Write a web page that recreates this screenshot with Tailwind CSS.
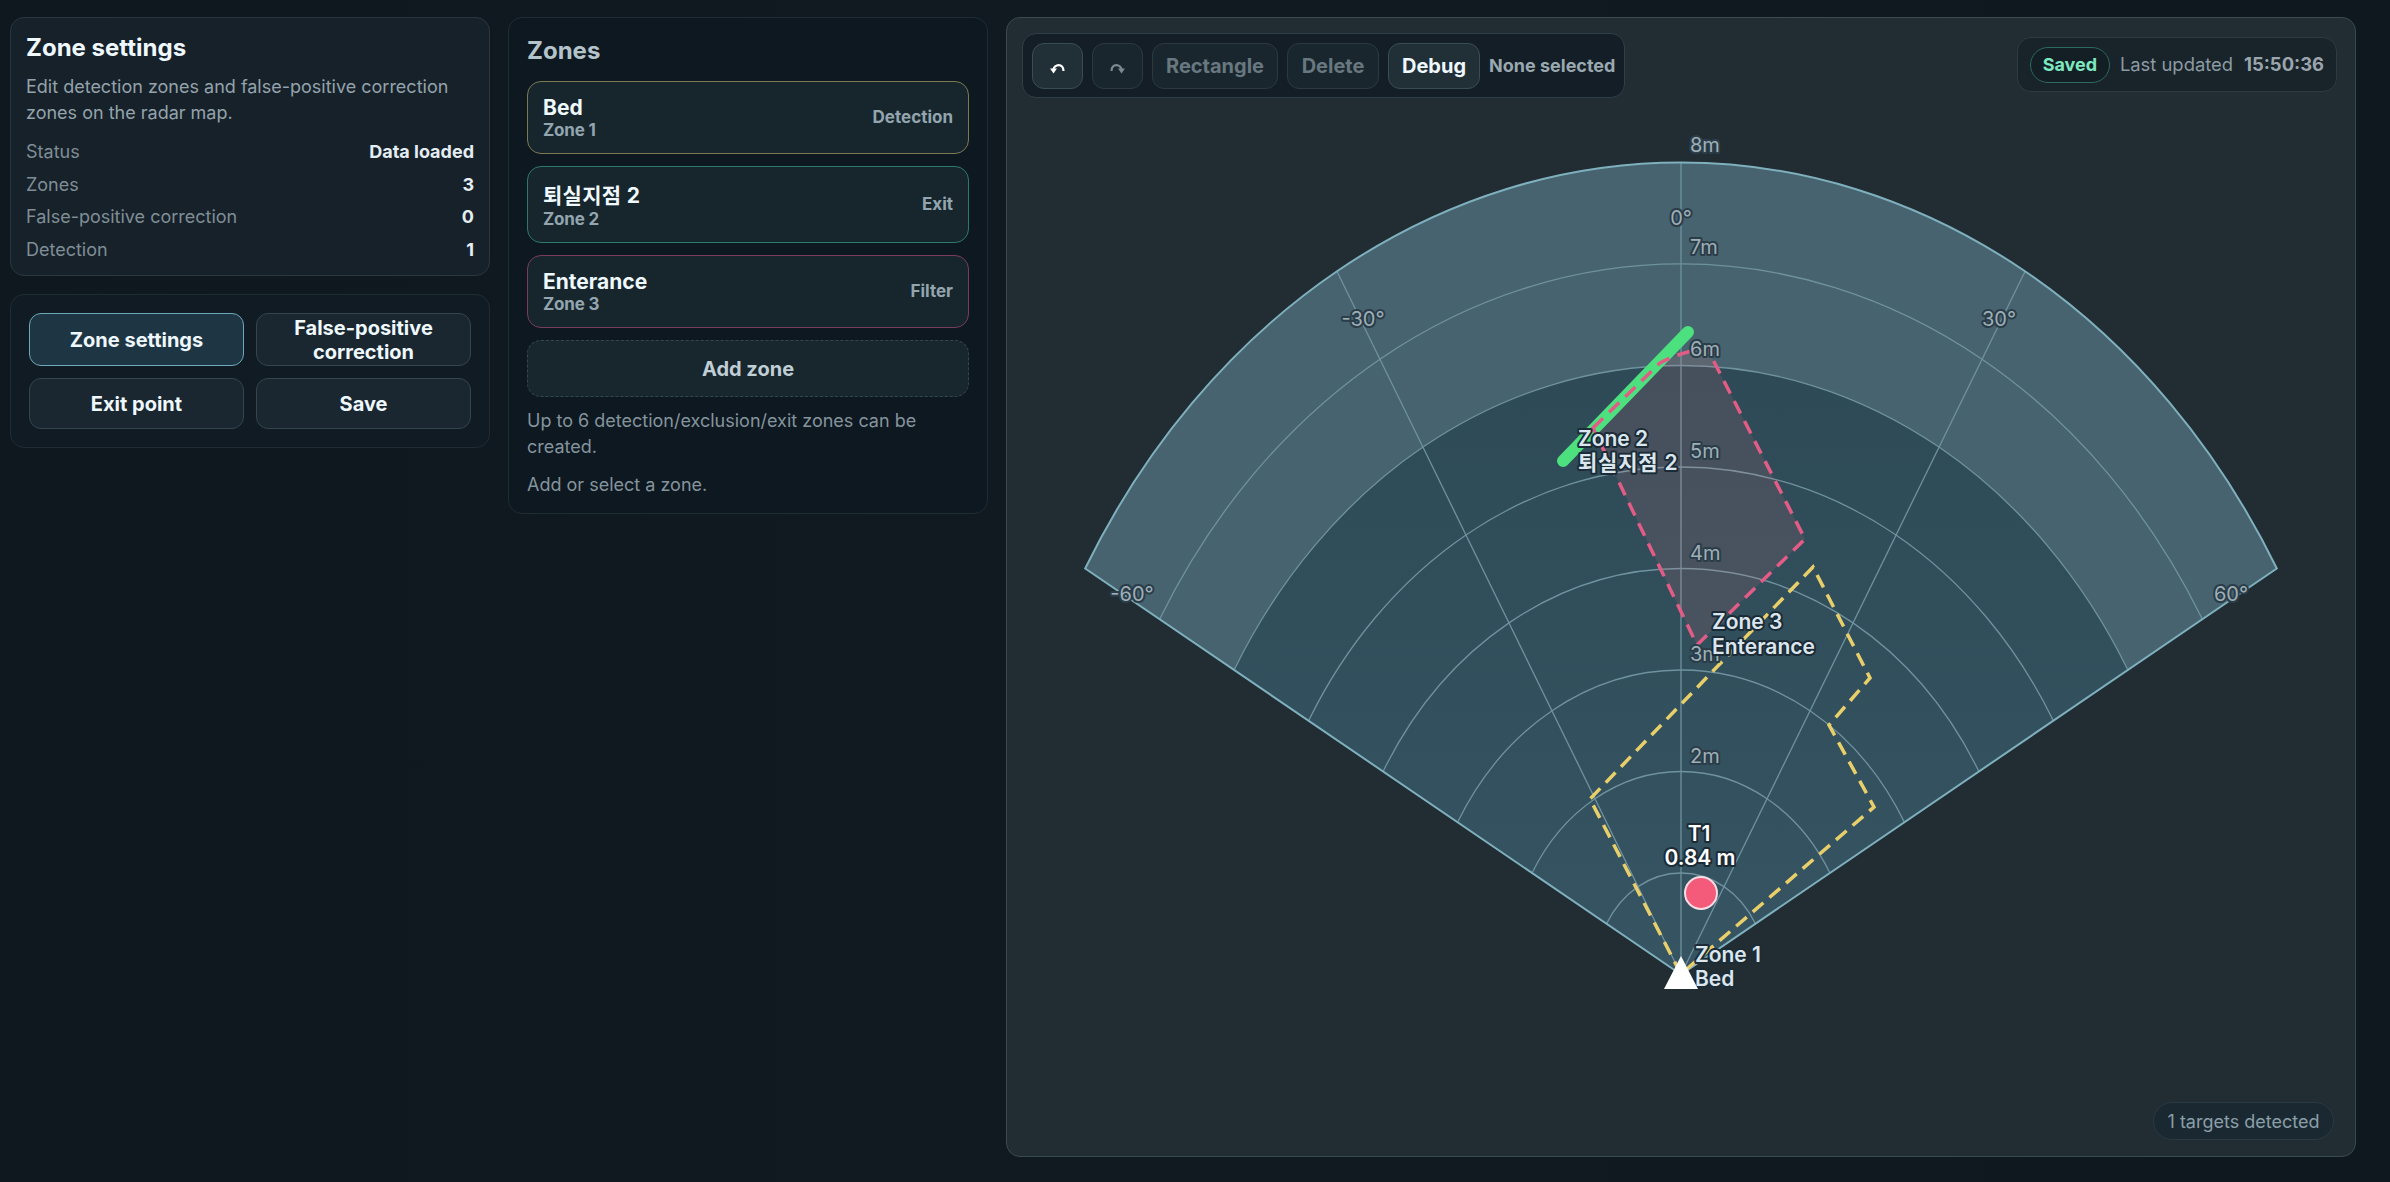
<!DOCTYPE html>
<html lang="en">
<head>
<meta charset="utf-8">
<script src="https://cdn.jsdelivr.net/npm/@tailwindcss/browser@4"></script>
<title>Zone settings</title>
</head>
<body class="m-0 h-[1182px] w-[2390px] overflow-hidden bg-[linear-gradient(90deg,#10181f,#111a21_50%,#10181f)] font-['Inter','Noto_Sans_CJK_KR',sans-serif] text-[#f0f6fa]">
<div class="flex items-start gap-[18px] pl-[10px] pt-[17px]">

  <aside class="flex w-[480px] flex-col gap-[18px]">
    <section class="h-[259px] rounded-[14px] border border-[#2a3740] bg-[#17212a] px-[15px] pt-[14px]">
      <h1 class="text-[24px] leading-[32px] font-bold text-[#eef8fd]">Zone settings</h1>
      <p class="mt-[10px] text-[18px] leading-[26px] text-[#94a3ab]">Edit detection zones and false-positive correction zones on the radar map.</p>
      <dl class="mt-[10px] text-[18px] leading-[32.5px]">
        <div class="flex justify-between"><dt class="text-[#7f8e96]">Status</dt><dd class="font-bold text-[#e4edf2]">Data loaded</dd></div>
        <div class="flex justify-between"><dt class="text-[#7f8e96]">Zones</dt><dd class="font-bold text-[#e4edf2]">3</dd></div>
        <div class="flex justify-between"><dt class="text-[#7f8e96]">False-positive correction</dt><dd class="font-bold text-[#e4edf2]">0</dd></div>
        <div class="flex justify-between"><dt class="text-[#7f8e96]">Detection</dt><dd class="font-bold text-[#e4edf2]">1</dd></div>
      </dl>
    </section>
    <section class="grid h-[154px] grid-cols-2 grid-rows-[53px_51px] gap-[12px] rounded-[14px] border border-[#1f2c34] bg-[#111b23] p-[18px]">
      <button class="rounded-[12px] border border-[#6ea8bb] bg-[#1e3644] text-[20px] leading-[24px] font-bold text-[#eef8fd]">Zone settings</button>
      <button class="rounded-[12px] border border-[#33454e] bg-[#1a2730] text-[20px] leading-[24px] font-bold text-[#eef8fd]">False-positive correction</button>
      <button class="rounded-[12px] border border-[#33454e] bg-[#1a2730] text-[20px] leading-[24px] font-bold text-[#eef8fd]">Exit point</button>
      <button class="rounded-[12px] border border-[#33454e] bg-[#1a2730] text-[20px] leading-[24px] font-bold text-[#eef8fd]">Save</button>
    </section>
  </aside>

  <section class="h-[497px] w-[480px] rounded-[14px] border border-[#1f2c34] bg-[#0e1820] px-[18px] pt-[17px]">
    <h2 class="text-[24px] leading-[32px] font-bold text-[#b4c3ca]">Zones</h2>
    <div class="mt-[14px] flex flex-col gap-[12px]">
      <div class="flex h-[73px] items-center justify-between rounded-[14px] border border-[#7d7a52] bg-[#17252d] px-[15px]">
        <div class="pt-[2px]"><div class="text-[21px] leading-[24px] font-bold text-[#eef8fd]">Bed</div><div class="text-[17px] leading-[21px] font-bold tracking-[-0.2px] text-[#93a5ae]">Zone 1</div></div>
        <span class="text-[17px] font-bold text-[#93a5ae]">Detection</span>
      </div>
      <div class="flex h-[77px] items-center justify-between rounded-[14px] border border-[#2d7a68] bg-[#17252d] px-[15px]">
        <div class="pt-[4px]"><div class="text-[21px] leading-[26px] font-bold tracking-[0.3px] text-[#eef8fd]">퇴실지점 2</div><div class="text-[17px] leading-[21px] font-bold tracking-[-0.2px] text-[#93a5ae]">Zone 2</div></div>
        <span class="text-[17px] font-bold text-[#93a5ae]">Exit</span>
      </div>
      <div class="flex h-[73px] items-center justify-between rounded-[14px] border border-[#7a3c5e] bg-[#17252d] px-[15px]">
        <div class="pt-[2px]"><div class="text-[21px] leading-[24px] font-bold text-[#eef8fd]">Enterance</div><div class="text-[17px] leading-[21px] font-bold tracking-[-0.2px] text-[#93a5ae]">Zone 3</div></div>
        <span class="text-[17px] font-bold text-[#93a5ae]">Filter</span>
      </div>
      <button class="h-[57px] rounded-[14px] border border-dashed border-[#34464f] bg-[#18262e] text-[20px] font-bold text-[#c0ced5]">Add zone</button>
    </div>
    <p class="mt-[11px] text-[18px] leading-[26px] text-[#84949d]">Up to 6 detection/exclusion/exit zones can be created.</p>
    <p class="mt-[12px] text-[18px] leading-[26px] text-[#84949d]">Add or select a zone.</p>
  </section>

  <main class="relative h-[1140px] w-[1350px] rounded-[14px] border border-[#3a4a52] bg-[#212c33]">
    <svg class="absolute -top-px -left-px" width="1350" height="1140" viewBox="1006 17 1350 1140" fill="none" font-family="Inter, 'Noto Sans CJK KR', sans-serif">
      <defs>
        <linearGradient id="sector" x1="0" y1="974" x2="0" y2="370" gradientUnits="userSpaceOnUse">
          <stop offset="0" stop-color="#365462"/>
          <stop offset="1" stop-color="#2e4a57"/>
        </linearGradient>
      </defs>
      <path d="M1681 974.5 L1085.16 568.5 A688 812 0 0 1 2276.84 568.5 Z" fill="url(#sector)"/>
      <path d="M1234.12 670 A516 609 0 0 1 2127.88 670 L2276.84 568.5 A688 812 0 0 0 1085.16 568.5 Z" fill="#47636f"/>

      <g stroke="#6f929f" stroke-width="1.3">
        <path d="M1606.52 923.75 A86 101.5 0 0 1 1755.48 923.75"/>
        <path d="M1532.04 873 A172 203 0 0 1 1829.96 873"/>
        <path d="M1457.56 822.25 A258 304.5 0 0 1 1904.44 822.25"/>
        <path d="M1383.08 771.5 A344 406 0 0 1 1978.92 771.5"/>
        <path d="M1308.6 720.75 A430 507.5 0 0 1 2053.4 720.75"/>
        <path d="M1234.12 670 A516 609 0 0 1 2127.88 670"/>
        <path d="M1159.64 619.25 A602 710.5 0 0 1 2202.36 619.25"/>
        <path d="M1681 974.5 L1337 271.5"/>
        <path d="M1681 974.5 L1681 162.5"/>
        <path d="M1681 974.5 L2025 271.5"/>
      </g>
      <path d="M1681 974.5 L1085.16 568.5 A688 812 0 0 1 2276.84 568.5 Z" stroke="#7fb0bd" stroke-width="2"/>

      <path d="M1681 974 L1590 799 L1813 567 L1870 678 L1829 725 L1874 807 Z" stroke="#e8cf6a" stroke-width="3.5" stroke-dasharray="14 8"/>
      <path d="M1593 428 L1660 363 Q1680 352 1707 348 L1805 539 L1697 645 Z" fill="#f67c82" fill-opacity="0.12"/>
      <path d="M1563 461 L1688 332" stroke="#4de07f" stroke-width="12" stroke-linecap="round"/>
      <path d="M1593 428 L1660 363 Q1680 352 1707 348 L1805 539 L1697 645 Z" stroke="#e25c85" stroke-width="3.5" stroke-dasharray="14 8.5"/>

      <g font-size="20" fill="#9fafb7" stroke="#2a3d49" stroke-width="4" stroke-linejoin="round" class="[paint-order:stroke]">
        <text x="1690" y="152">8m</text>
        <text x="1690" y="254">7m</text>
        <text x="1690" y="356">6m</text>
        <text x="1690" y="458">5m</text>
        <text x="1690" y="560">4m</text>
        <text x="1690" y="661">3m</text>
        <text x="1690" y="763">2m</text>
        <text x="1681" y="225" text-anchor="middle">0°</text>
        <text x="1363" y="326" text-anchor="middle">-30°</text>
        <text x="1999" y="326" text-anchor="middle">30°</text>
        <text x="1132" y="601" text-anchor="middle">-60°</text>
        <text x="2231" y="601" text-anchor="middle">60°</text>
      </g>

      <g font-size="21" font-weight="600" fill="#dbe6ee" stroke="#1c2c36" stroke-width="4" stroke-linejoin="round" class="[paint-order:stroke]">
        <text x="1578" y="446">Zone 2</text>
        <text x="1578" y="470" letter-spacing="0.8">퇴실지점 2</text>
        <text x="1712" y="629">Zone 3</text>
        <text x="1712" y="654">Enterance</text>
        <text x="1695" y="962">Zone 1</text>
        <text x="1695" y="986">Bed</text>
      </g>

      <path d="M1681 956 L1698 989 L1664 989 Z" fill="#fff"/>
      <circle cx="1701" cy="893" r="16" fill="#f45b7a" stroke="#f8dde4" stroke-width="2"/>
      <g font-size="21" font-weight="600" fill="#fff" stroke="#1c2c36" stroke-width="4" stroke-linejoin="round" text-anchor="middle" class="[paint-order:stroke]">
        <text x="1699" y="841">T1</text>
        <text x="1700" y="865">0.84 m</text>
      </g>
    </svg>

    <div class="relative flex items-start justify-between pt-[15px] pr-[18px] pl-[15px]">
      <div class="flex h-[65px] items-center gap-[9px] rounded-[14px] border border-[#2f3f47] bg-[#141e26] px-[9px]">
        <button class="flex h-[46px] w-[51px] items-center justify-center rounded-[12px] border border-[#3a4d56] bg-[#212f37] pt-[5px] text-white" aria-label="Undo">
          <svg width="15" height="11" viewBox="0 0 15 11" fill="none" stroke="currentColor" stroke-width="2.2"><path d="M3.5 6.5 C4 1.5 13.5 -0.5 13.5 8"/><path d="M0 5.5 L7 5.5 L3.5 10.5 Z" fill="currentColor" stroke="none"/></svg>
        </button>
        <button class="flex h-[46px] w-[51px] items-center justify-center rounded-[12px] border border-[#2b3a42] bg-[#1a262d] pt-[5px] text-[#7b8a91]" aria-label="Redo">
          <svg width="15" height="11" viewBox="0 0 15 11" fill="none" stroke="currentColor" stroke-width="2.2"><path d="M11.5 6.5 C11 1.5 1.5 -0.5 1.5 8"/><path d="M8 5.5 L15 5.5 L11.5 10.5 Z" fill="currentColor" stroke="none"/></svg>
        </button>
        <button class="h-[46px] w-[126px] rounded-[12px] border border-[#2b3a42] bg-[#1a262d] text-[20px] font-bold text-[#687880]">Rectangle</button>
        <button class="h-[46px] w-[92px] rounded-[12px] border border-[#2b3a42] bg-[#1a262d] text-[20px] font-bold text-[#687880]">Delete</button>
        <button class="h-[46px] w-[92px] rounded-[12px] border border-[#3a4d56] bg-[#212f37] text-[20px] font-bold text-[#eef8fd]">Debug</button>
        <span class="text-[18px] font-bold text-[#9aa9b0]">None selected</span>
      </div>
      <div class="mt-[4px] flex h-[55px] items-center gap-[10px] rounded-[14px] border border-[#2c3b43] bg-[#18232a] px-[12px]">
        <span class="flex h-[36px] w-[80px] items-center justify-center rounded-full border border-[#2c6a5c] bg-[#141f25] text-[18px] font-bold text-[#7ee8c0]">Saved</span>
        <span class="text-[18.4px] text-[#8c9aa2]">Last updated</span>
        <span class="ml-[1px] text-[18.4px] font-bold text-[#9aa5ad]">15:50:36</span>
      </div>
    </div>

    <div class="absolute right-[21px] bottom-[16px] flex h-[38px] w-[181px] items-center justify-center rounded-full border border-[#2a3a42] bg-[#1a2931] text-[18px] text-[#8b9ea8]">1 targets detected</div>
  </main>
</div>
</body>
</html>
